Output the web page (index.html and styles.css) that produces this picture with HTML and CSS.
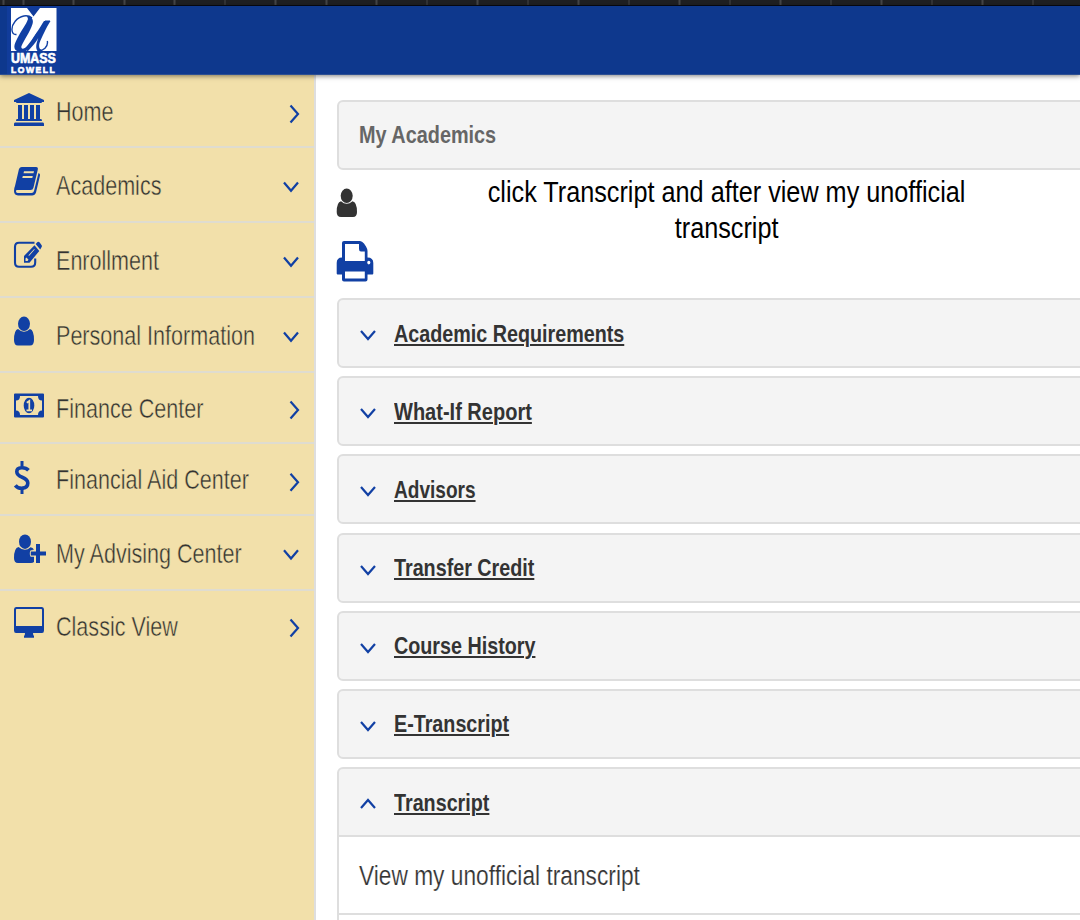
FILE: index.html
```html
<!DOCTYPE html>
<html lang="en">
<head>
<meta charset="utf-8">
<title>My Academics</title>
<link rel="stylesheet" href="styles.css">
</head>
<body>
<div class="tabstrip"></div>
<header class="topbar">
  <div class="logo">
    <svg class="logo-mark" width="46" height="44" viewBox="11 8 46 44">
      <path fill="#fff" d="M11 8H27L33.500 16.500L40 8H56.500V51H11Z"/>
      <path fill="none" stroke="#1140a4" stroke-width="1.400" d="M16.500 34.500C11 35 10.500 27 15 21.500C20 15 28 14.500 32 18M50 21.300H45M47.300 41C48.500 47 43 51 38 51M27 49.500L38 32"/>
      <path fill="#1140a4" d="M27 16C31 16 34 19 32.500 24C30 32 24 40 21.500 46C20.500 49.500 24 49.500 27 46C33 39 39.500 28 44 21H50.500C46 28 42 37 39.500 43C38.500 47 39.500 50 42 49.500L39 51.500H27.500L27 50.500C24 52 18 52.500 15.500 50C13 47 15 43 17.500 38C21.500 30 26 25 28 19Z"/>
      <path fill="#fff" d="M28 51C32 47 36 42 38.300 38C36 44 35.500 48 37.500 51Z"/>
    </svg>
    <span class="logo-top">UMASS</span>
    <span class="logo-bottom">LOWELL</span>
  </div>
</header>
<div class="layout">
  <nav class="sidebar">
    <a class="item h73">
      <svg class="icon" viewBox="12 88 36 45"><path d="M29 93L44 100V102H42Q42 103 41 103H17Q16 103 16 102H14V100ZM18 105H22V119H24V105H28V119H30V105H34V119H36V105H40V119H41Q42 119 42 121H16Q16 119 17 119H18ZM15 122.500H43Q44 122.500 44 124V126H14V124Q14 122.500 15 122.500Z"/></svg>
      <span class="label">Home</span>
      <svg class="chev" viewBox="281 88 20 45"><path d="M290.500 105.500L298 114L290.500 122.500"/></svg>
    </a>
    <a class="item">
      <svg class="icon" viewBox="12 162 36 45"><path fill-rule="evenodd" d="M22 167H36Q38.500 167 37.700 170L33.500 187.500Q33 190 30.500 190H17Q15.500 190 16 191.500Q16.300 193 18 193H31.500Q33.500 193 34 191L38.500 173Q40.500 173.500 40 175.500L36 192.500Q35 195.500 32 195.500H18Q14 195 14 191Q14 188 15 186L18.500 171Q19 167 22 167ZM24 171.300L23.500 173.200H33.500L34 171.300ZM22.800 176L22.300 178H32.300L32.800 176Z"/></svg>
      <span class="label">Academics</span>
      <svg class="chev" viewBox="281 162 20 45"><path d="M284 182.500L291 190.800L298 182.500"/></svg>
    </a>
    <a class="item">
      <svg class="icon" viewBox="12 237 36 45"><path class="line" d="M34.500 242.800H19Q15 242.800 15 247V262.500Q15 266.800 19 266.800H31Q35.200 266.800 35.200 262.500V258.500"/><path fill-rule="evenodd" d="M34.500 245.300L39.300 251L29.500 262.700H24V256ZM25.500 258.500V261H27.500L28.500 259.800L26.500 257.500ZM28.500 255.300L29 255.900L34.700 249.500L34.200 248.900ZM35.700 244L37.500 242Q38.500 241.200 39.500 242.200L41.500 245Q42.300 246.200 41.500 247.200L40.200 249.400Z"/></svg>
      <span class="label">Enrollment</span>
      <svg class="chev" viewBox="281 237 20 45"><path d="M284 257.500L291 265.800L298 257.500"/></svg>
    </a>
    <a class="item">
      <svg class="icon" viewBox="12 312 36 45"><ellipse cx="24" cy="323.800" rx="6" ry="7.200"/><path d="M18 329Q24 334.500 30 329Q34 330 34 340Q34 345.500 30 345.500H18Q14 345.500 14 340Q14 330 18 329Z"/></svg>
      <span class="label">Personal Information</span>
      <svg class="chev" viewBox="281 312 20 45"><path d="M284 332.500L291 340.800L298 332.500"/></svg>
    </a>
    <a class="item h71">
      <svg class="icon" viewBox="12 385 36 45"><path fill-rule="evenodd" d="M15 393.500H43Q44 393.500 44 394.500V416.500Q44 417.500 43 417.500H15Q14 417.500 14 416.500V394.500Q14 393.500 15 393.500ZM20 396Q20 400.500 16 400.500V410.500Q20 410.500 20 415H38Q38 410.500 42 410.500V400.500Q38 400.500 38 396Z"/><ellipse cx="29" cy="405.500" rx="5.300" ry="7.800"/><path class="cut" d="M26.800 402.800L29.300 401V409.800M26.500 410.300H32"/></svg>
      <span class="label">Finance Center</span>
      <svg class="chev" viewBox="281 385 20 45"><path d="M290.500 401.500L298 410L290.500 418.500"/></svg>
    </a>
    <a class="item h72">
      <svg class="icon" viewBox="12 456.500 36 45"><path class="dollar" d="M28.500 469.800C25.500 466.500 16.800 466 16.800 471.300C16.800 478 27.800 475.500 27.800 482.500C27.800 489 18.500 489 15.300 484.800"/><path d="M20.500 460.500H23.500V466H20.500ZM20.500 487.500H23.500V493.500H20.500Z"/></svg>
      <span class="label aid">Financial Aid Center</span>
      <svg class="chev" viewBox="281 456.500 20 45"><path d="M290.500 473.200L298 481.700L290.500 490.200"/></svg>
    </a>
    <a class="item">
      <svg class="icon" viewBox="12 530 36 45"><ellipse cx="25" cy="541.700" rx="6" ry="7.200"/><path d="M18.500 547Q25 552.500 30.500 547.200Q33 547.500 34 549.800H32.500V550.300H31Q29.800 550.500 29.800 553Q29.800 556.700 31 556.700H34V562Q33 563 31 563H18Q14 563 14 558Q14 548 18.500 547ZM36 544H40V551.500H46V555.500H40V563H36V555.500H30.800V551.500H36Z"/></svg>
      <span class="label">My Advising Center</span>
      <svg class="chev" viewBox="281 530 20 45"><path d="M284 550.200L291 558.500L298 550.200"/></svg>
    </a>
    <a class="item h73 last">
      <svg class="icon" viewBox="12 604 36 45"><path fill-rule="evenodd" d="M16 607H42Q44 607 44 609.500V630.500Q44 633 42 633H33Q33 635.500 34 636V637.700H24V636Q25 635.500 25 633H16Q14 633 14 630.500V609.500Q14 607 16 607ZM16.600 609Q16 609 16 610V626H42V610Q42 609 41.400 609Z"/></svg>
      <span class="label classic">Classic View</span>
      <svg class="chev" viewBox="281 604 20 45"><path d="M290.500 619.500L298 628L290.500 636.500"/></svg>
    </a>
  </nav>
  <main class="content">
    <h1 class="panel title"><span class="bold-text">My Academics</span></h1>
    <section class="tools">
      <div class="tool-icons">
        <svg width="22" height="30" viewBox="336 188 22 30"><g fill="#333"><ellipse cx="346.700" cy="195.800" rx="6" ry="7.200"/><path d="M341 201.200Q346.700 206.500 352.500 201.200Q357 202 357 212Q357 217 353 217H341Q336.700 217 336.700 212Q336.700 202 341 201.200Z"/></g></svg>
        <svg width="38" height="42" viewBox="336 240 38 42"><path fill="#1140a4" fill-rule="evenodd" d="M344 241H360Q362 241 364 243.500L366 246.500Q367.500 249 367.500 251V257.500Q373.300 257.500 373.300 263V273.500Q373.300 274.500 372.300 274.500H367.500V279.500Q367.500 281.500 365.500 281.500H344Q342 281.500 342 279.500V274.500H337.700Q336.700 274.500 336.700 273.500V263Q336.700 257.500 342 257.500V243Q342 241 344 241ZM345 244V261H364.800V251.500H361Q359 251.500 359 249V244ZM345 271.500V278.500H364.800V271.500ZM368.800 260.800A1.600 1.800 0 1 0 368.800 264.400A1.600 1.800 0 1 0 368.800 260.800Z"/></svg>
      </div>
      <p class="hint"><span>click Transcript and after view my unofficial</span><span>transcript</span></p>
    </section>
    <section class="accordion">
      <div class="panel"><svg class="mini" viewBox="0 0 18 12"><path d="M2 2L9 10L16 2"/></svg><a class="bold-text link">Academic Requirements</a></div>
      <div class="panel"><svg class="mini" viewBox="0 0 18 12"><path d="M2 2L9 10L16 2"/></svg><a class="bold-text link wide">What-If Report</a></div>
      <div class="panel"><svg class="mini" viewBox="0 0 18 12"><path d="M2 2L9 10L16 2"/></svg><a class="bold-text link narrow">Advisors</a></div>
      <div class="panel"><svg class="mini" viewBox="0 0 18 12"><path d="M2 2L9 10L16 2"/></svg><a class="bold-text link">Transfer Credit</a></div>
      <div class="panel"><svg class="mini" viewBox="0 0 18 12"><path d="M2 2L9 10L16 2"/></svg><a class="bold-text link">Course History</a></div>
      <div class="panel"><svg class="mini" viewBox="0 0 18 12"><path d="M2 2L9 10L16 2"/></svg><a class="bold-text link">E-Transcript</a></div>
      <div class="open">
        <div class="panel"><svg class="mini" viewBox="0 0 18 12"><path d="M2 10L9 2L16 10"/></svg><a class="bold-text link">Transcript</a></div>
        <div class="row"><span>View my unofficial transcript</span></div>
        <div class="row"></div>
      </div>
    </section>
  </main>
</div>
</body>
</html>
```
FILE: styles.css
```css
* { box-sizing: border-box; }
body {
  margin: 0;
  height: 920px;
  overflow: hidden;
  background: #fff;
  font-family: "Liberation Sans", Arial, sans-serif;
  display: flex;
  flex-direction: column;
}
.tabstrip {
  flex: none;
  height: 6px;
  border-bottom: 1px solid #080a12;
  background: repeating-linear-gradient(90deg, #444547 0 1.5px, #1f2022 1.5px 50.5px) 22.5px 0;
}
.topbar {
  flex: none;
  height: 69px;
  background: #0e388d;
  border-bottom: 1px solid #2d4f92;
  box-shadow: 0 1px 5px rgba(0, 0, 0, .5);
  position: relative;
  z-index: 1;
}
.logo {
  margin-left: 7px;
  width: 53px;
  height: 68px;
  padding: 2px 0 0 4px;
  background: #113c9b;
  color: #fff;
  font-weight: bold;
  display: flex;
  flex-direction: column;
}
.logo-mark { display: block; flex: none; }
.logo-top, .logo-bottom {
  transform-origin: 0 0;
  white-space: nowrap;
  width: max-content;
  -webkit-text-stroke: .7px #fff;
}
.logo-top { font-size: 14.5px; line-height: 13px; transform: scaleX(.855); }
.logo-bottom { font-size: 9.5px; line-height: 9px; letter-spacing: 1.7px; transform: scaleX(.9); }

.layout { flex: 1; display: flex; min-height: 0; }
.sidebar {
  width: 316px;
  flex: none;
  background: #f2e0aa;
  border-right: 2px solid #dedede;
}
.item {
  height: 75px;
  padding-left: 12px;
  padding-right: 13px;
  border-bottom: 2px solid #dfdcd0;
  display: flex;
  align-items: center;
}
.h73 { height: 73px; }
.h71 { height: 71px; }
.h72 { height: 72px; }
.last { border-color: transparent; }
.icon { width: 36px; height: 45px; flex: none; fill: #1140a4; }
.icon .line { fill: none; stroke: #1140a4; stroke-width: 2.1; }
.icon .cut { fill: none; stroke: #f2e0aa; stroke-width: 1.7; }
.icon .dollar { fill: none; stroke: #1140a4; stroke-width: 3.6; }
.chev { width: 20px; height: 45px; flex: none; }
.chev path, .mini path { fill: none; stroke: #1140a4; stroke-width: 2.2; }
.label {
  flex: 1;
  margin-left: 8px;
  padding-top: 3px;
  font-size: 28px;
  line-height: 32px;
  width: 225px;
  color: #333;
  white-space: nowrap;
  transform: scaleX(.77);
  transform-origin: 0 50%;
  -webkit-text-stroke: .45px #f2e0aa;
}
.aid { padding-top: 2px; }
.classic { padding-top: 1px; }

.content { flex: 1; min-width: 0; overflow: hidden; padding: 25px 0 0 20.5px; }
.panel {
  width: 760px;
  height: 70px;
  padding-left: 20.5px;
  background: #f4f4f4;
  border: 2px solid #dedede;
  border-radius: 6px;
  display: flex;
  align-items: center;
}
.title { margin: 0; color: #666; }
.bold-text {
  font-size: 24px;
  font-weight: bold;
  line-height: 28px;
  white-space: nowrap;
  transform: scaleX(.822);
  transform-origin: 0 50%;
}
.title .bold-text { transform: scaleX(.827); }
.link {
  padding-top: 1px;
  color: #333;
  text-decoration: underline;
  text-decoration-thickness: 2px;
  text-underline-offset: 2px;
}
.wide { transform: scaleX(.834); }
.narrow { transform: scaleX(.794); }
.tools { display: flex; height: 128px; padding-top: 18px; }
.tool-icons { width: 38px; display: flex; flex-direction: column; gap: 22px; margin-left: -.5px; }
.hint {
  margin: -14px 0 0;
  width: 709px;
  display: flex;
  flex-direction: column;
  align-items: center;
  font-size: 29px;
  line-height: 36px;
  color: #000;
  white-space: nowrap;
}
.hint span { transform: scaleX(.87); }
.accordion { display: flex; flex-direction: column; gap: 8.2px; }
.mini { width: 18px; height: 12px; margin: 4px 17px 0 0; flex: none; }
.open .panel { border-radius: 6px 6px 0 0; }
.row {
  width: 760px;
  height: 78px;
  padding: 2px 0 0 20.5px;
  border: 2px solid #dedede;
  border-top: 0;
  display: flex;
  align-items: center;
}
.row span {
  font-size: 27px;
  line-height: 32px;
  color: #333;
  white-space: nowrap;
  transform: scaleX(.842);
  transform-origin: 0 50%;
  -webkit-text-stroke: .2px #fff;
}
```
